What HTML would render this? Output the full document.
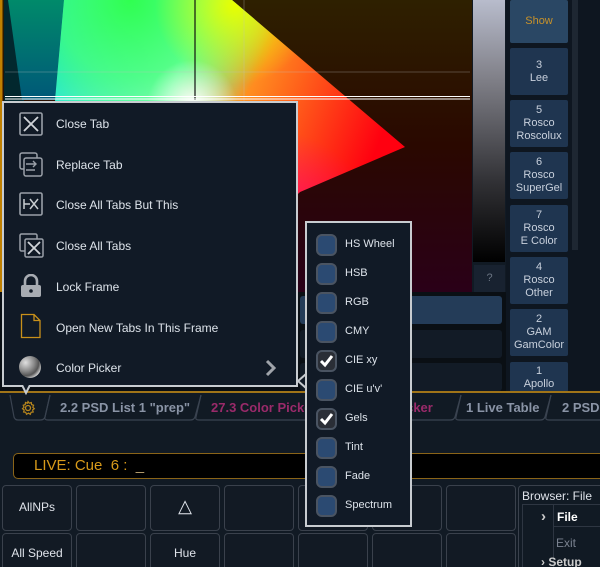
<!DOCTYPE html>
<html><head><meta charset="utf-8"><style>
*{margin:0;padding:0;box-sizing:border-box}
html{width:600px;height:567px;overflow:hidden}
body{width:600px;height:567px;overflow:hidden;background:#111a24;font-family:"Liberation Sans",sans-serif;position:relative}
.abs{position:absolute}
.gbtn{position:absolute;left:510px;width:58px;background:#1f3550;color:#c8d0dc;font-size:11px;text-align:center;line-height:13px;display:flex;flex-direction:column;justify-content:center;border-radius:2px}
.row{position:absolute;left:300px;width:202px;height:28px;border-radius:3px;background:#121b26}
.tab{position:absolute;top:394px;height:27px;font-size:13px;font-weight:bold;color:#8a94a6;line-height:27px;padding-left:10px;white-space:nowrap;overflow:hidden}
.sep{position:absolute;top:396px;width:8px;height:24px}
.key{position:absolute;width:70px;background:#121a24;border:1.5px solid #3a414c;border-radius:4px;color:#dfe3ea;font-size:12px;text-align:center}
.menu{position:absolute;left:2px;top:101px;width:296px;height:286px;background:#111a26;border:2px solid #c8ccd0}
.mi{position:absolute;left:52px;font-size:12px;color:#dde3ea}
.ic{position:absolute;left:15px}
.sub{position:absolute;left:305px;top:221px;width:107px;height:306px;background:#111a26;border:2px solid #c8ccd0}
.cb{position:absolute;left:9px;width:21px;height:22px;border-radius:6px;background:#2b4a72;border:2px solid #4a5462}
.sl{position:absolute;left:38px;font-size:11px;color:#dde3ea}
</style></head><body>
<svg class="abs" style="left:0;top:0" width="472" height="292">
<defs>
<linearGradient id="bg" x1="0" y1="0" x2="0" y2="1"><stop offset="0" stop-color="#2e2000"/><stop offset="0.5" stop-color="#2a0800"/><stop offset="1" stop-color="#2a0018"/></linearGradient>
<linearGradient id="base" x1="0" y1="0" x2="1" y2="0.3"><stop offset="0" stop-color="#00d8ff"/><stop offset="0.4" stop-color="#b0ffe0"/><stop offset="0.6" stop-color="#ff9020"/><stop offset="1" stop-color="#ff0010"/></linearGradient>
<radialGradient id="gr" cx="130" cy="0" r="150" gradientUnits="userSpaceOnUse"><stop offset="0" stop-color="#30ff50"/><stop offset="0.5" stop-color="#40ff70" stop-opacity="0.8"/><stop offset="1" stop-color="#30ff50" stop-opacity="0"/></radialGradient>
<radialGradient id="ye" cx="235" cy="5" r="80" gradientUnits="userSpaceOnUse"><stop offset="0" stop-color="#e8ff00"/><stop offset="1" stop-color="#e8ff00" stop-opacity="0"/></radialGradient>
<radialGradient id="wh" cx="192" cy="105" r="45" gradientUnits="userSpaceOnUse"><stop offset="0" stop-color="#fff"/><stop offset="1" stop-color="#fff" stop-opacity="0"/></radialGradient>
<radialGradient id="mg" cx="270" cy="240" r="110" gradientUnits="userSpaceOnUse"><stop offset="0" stop-color="#ff0080"/><stop offset="1" stop-color="#ff0080" stop-opacity="0"/></radialGradient>
<linearGradient id="tl" x1="0" y1="0" x2="0" y2="1"><stop offset="0" stop-color="#008a6a"/><stop offset="1" stop-color="#005878"/></linearGradient>
</defs>
<rect width="472" height="292" fill="url(#bg)"/>
<rect x="4" width="20" height="292" fill="#02282e"/>
<polygon points="8,0 64,0 55,100 22,100" fill="url(#tl)"/>
<g>
<polygon points="64,0 232,0 405,147 300,192 260,230 200,260 60,120 55,100" fill="url(#base)"/>
<polygon points="64,0 232,0 405,147 300,192 260,230 200,260 60,120 55,100" fill="url(#gr)"/>
<polygon points="64,0 232,0 405,147 300,192 260,230 200,260 60,120 55,100" fill="url(#ye)"/>
<polygon points="64,0 232,0 405,147 300,192 260,230 200,260 60,120 55,100" fill="url(#wh)"/>
<polygon points="64,0 232,0 405,147 300,192 260,230 200,260 60,120 55,100" fill="url(#mg)"/>
</g>
<line x1="244" y1="0" x2="244" y2="292" stroke="#c0c0c0" stroke-opacity="0.3"/>
<line x1="5" y1="72" x2="470" y2="72" stroke="#c0c0c0" stroke-opacity="0.3"/>
<line x1="195" y1="0" x2="195" y2="100" stroke="#111" stroke-width="1.2"/>
<line x1="5" y1="96.5" x2="470" y2="96.5" stroke="#fff" stroke-width="1"/>
<line x1="5" y1="99" x2="470" y2="99" stroke="#fff" stroke-width="1"/>
<rect x="0" width="2.5" height="392" fill="#c08000"/>
</svg>
<div class="abs" style="left:473px;top:0;width:32px;height:262px;background:linear-gradient(#b8bccc,#808088 30%,#303034 70%,#000)"></div>
<div class="abs" style="left:474px;top:265px;width:31px;height:27px;background:#182230;color:#6a7482;font-size:11px;text-align:center;line-height:27px">?</div>
<div class="abs" style="left:506px;top:0;width:94px;height:392px;background:#0e1620"></div>
<div class="abs" style="left:572px;top:0;width:6px;height:250px;background:#1e2732"></div>
<div class="gbtn" style="top:0;height:43px;background:#2a4764;color:#c8922a">Show</div>
<div class="gbtn" style="top:48px;height:47px">3<br>Lee</div>
<div class="gbtn" style="top:100px;height:47px">5<br>Rosco<br>Roscolux</div>
<div class="gbtn" style="top:152px;height:47px">6<br>Rosco<br>SuperGel</div>
<div class="gbtn" style="top:205px;height:47px">7<br>Rosco<br>E Color</div>
<div class="gbtn" style="top:257px;height:47px">4<br>Rosco<br>Other</div>
<div class="gbtn" style="top:309px;height:47px">2<br>GAM<br>GamColor</div>
<div class="gbtn" style="top:362px;height:30px;justify-content:flex-start;padding-top:3px">1<br>Apollo</div>
<div class="abs" style="left:0;top:292px;width:506px;height:100px;background:#0a0f14"></div>
<div class="row" style="top:296px;background:#243c58"></div>
<div class="row" style="top:330px"></div>
<div class="row" style="top:363px"></div>
<div class="abs" style="left:0;top:391px;width:600px;height:2px;background:#a07418"></div>
<!-- tabs -->
<div class="tab" style="left:12px;width:34px;padding-left:8px">
<svg width="16" height="16" viewBox="0 0 16 16" style="margin-top:6px"><circle cx="8" cy="8" r="2.5" fill="none" stroke="#b8861c" stroke-width="1.3"/><path d="M8 1.5 L9.2 3.2 L11.3 2.5 L11.6 4.6 L13.6 5.2 L12.8 7.2 L14.3 8.7 L12.6 10 L13.2 12 L11.1 12.3 L10.3 14.3 L8.5 13.1 L6.5 14.3 L5.7 12.3 L3.6 12 L4.2 10 L2.5 8.7 L4 7.2 L3.2 5.2 L5.2 4.6 L5.5 2.5 L7.4 3.2Z" fill="none" stroke="#b8861c" stroke-width="1.2"/></svg></div>
<svg class="abs" style="left:0;top:393px" width="600" height="30"><g fill="none" stroke="#3a4350" stroke-width="1.2">
<path d="M10 2 L14 24 Q15 27 18 27 L40 27 Q44 27 45 24 L50 2"/>
<path d="M50 2 L45 24 Q44 27 48 27 L190 27 Q194 27 195 24 L201 2"/>
<path d="M201 2 L196 24 Q195 27 199 27 L450 27 Q454 27 455 24 L461 2"/>
<path d="M461 2 L456 24 Q455 27 459 27 L540 27 Q544 27 545 24 L551 2"/>
<path d="M551 2 L546 24 Q545 27 549 27 L600 27"/>
</g></svg>
<div class="tab" style="left:50px;width:148px">2.2 PSD List 1 "prep"</div>
<div class="tab" style="left:201px;width:255px;color:#9a2a6a">27.3 Color Picker &nbsp; 27.3 Color Picker</div>
<div class="tab" style="left:456px;width:92px">1 Live Table</div>
<div class="tab" style="left:552px;width:60px">2 PSD</div>
<!-- command line -->
<div class="abs" style="left:13px;top:453px;width:600px;height:26px;background:#000;border:1.5px solid #8a6418;border-radius:5px;color:#d89a1a;font-size:15px;line-height:23px;padding-left:20px;white-space:pre">LIVE: Cue  6 :  <span style="color:#b8a070">_</span></div>
<!-- keys -->
<div class="key" style="left:2px;top:485px;height:46px;line-height:43px">AllNPs</div>
<div class="key" style="left:76px;top:485px;height:46px"></div>
<div class="key" style="left:150px;top:485px;height:46px;font-size:18px;line-height:40px">△</div>
<div class="key" style="left:224px;top:485px;height:46px"></div>
<div class="key" style="left:298px;top:485px;height:46px"></div>
<div class="key" style="left:372px;top:485px;height:46px"></div>
<div class="key" style="left:446px;top:485px;height:46px"></div>
<div class="key" style="left:2px;top:533px;height:40px;line-height:38px">All Speed</div>
<div class="key" style="left:76px;top:533px;height:40px"></div>
<div class="key" style="left:150px;top:533px;height:40px;line-height:38px">Hue</div>
<div class="key" style="left:224px;top:533px;height:40px"></div>
<div class="key" style="left:298px;top:533px;height:40px"></div>
<div class="key" style="left:372px;top:533px;height:40px"></div>
<div class="key" style="left:446px;top:533px;height:40px"></div>
<div class="abs" style="left:518px;top:485px;width:90px;height:90px;background:#111a24;border:1.5px solid #3a414c;border-radius:4px">
<div style="color:#dfe3ea;font-size:12px;padding:3px 0 0 3px">Browser: File</div>
<div class="abs" style="left:3px;top:18px;width:90px;height:80px;border:1px solid #2e3642"></div>
<div class="abs" style="left:34px;top:19px;height:80px;border-left:1px solid #2e3642"></div>
<div class="abs" style="left:35px;top:19px;width:60px;height:22px;border-bottom:1px solid #2e3642;color:#fff;font-size:12px;font-weight:bold;padding:5px 0 0 3px">File</div>
<div class="abs" style="left:22px;top:22px;color:#ccc;font-size:15px;font-weight:bold">›</div>
<div class="abs" style="left:37px;top:50px;color:#7a8290;font-size:12px">Exit</div>
<div class="abs" style="left:22px;top:69px;color:#ccc;font-size:12px;font-weight:bold">› Setup</div>
</div>
<!-- context menu -->
<div class="menu">
<svg class="ic" style="top:9px" width="24" height="24"><rect x="1" y="1" width="22" height="22" rx="1.5" fill="none" stroke="#9aa0a8" stroke-width="1.6"/><path d="M5 5 L19 19 M19 5 L5 19" stroke="#d0d4d8" stroke-width="1.8"/></svg>
<div class="mi" style="top:14px">Close Tab</div>
<svg class="ic" style="top:49px" width="24" height="25"><rect x="1" y="1" width="17" height="16" rx="2" fill="none" stroke="#9aa0a8" stroke-width="1.5"/><rect x="5" y="6" width="18" height="18" rx="2" fill="#111a26" stroke="#9aa0a8" stroke-width="1.5"/><path d="M7 12 L17 12 M14 9 L17 12 L14 15 M16 18 L7 18" stroke="#9aa0a8" stroke-width="1.4" fill="none"/></svg>
<div class="mi" style="top:55px">Replace Tab</div>
<svg class="ic" style="top:89px" width="24" height="24"><rect x="1" y="1" width="22" height="22" rx="1.5" fill="none" stroke="#9aa0a8" stroke-width="1.6"/><path d="M5 7 L5 17 M5 12 L11 12 M11 7 L19 17 M19 7 L11 17" stroke="#c8ccd0" stroke-width="1.5"/></svg>
<div class="mi" style="top:95px">Close All Tabs But This</div>
<svg class="ic" style="top:130px" width="25" height="25"><rect x="1" y="1" width="17" height="17" rx="1.5" fill="none" stroke="#9aa0a8" stroke-width="1.5"/><rect x="6" y="6" width="18" height="18" rx="1.5" fill="#111a26" stroke="#9aa0a8" stroke-width="1.5"/><path d="M9 9 L21 21 M21 9 L9 21" stroke="#d0d4d8" stroke-width="1.8"/></svg>
<div class="mi" style="top:136px">Close All Tabs</div>
<svg class="ic" style="top:171px;left:16px" width="22" height="24"><path d="M5 11 V7 A6 6 0 0 1 17 7 V11" fill="none" stroke="#a8acb2" stroke-width="2.6"/><rect x="1" y="11" width="20" height="12" rx="2" fill="#a8acb2"/><circle cx="11" cy="17" r="1.8" fill="#111a26"/></svg>
<div class="mi" style="top:177px">Lock Frame</div>
<svg class="ic" style="top:210px;left:16px" width="22" height="26"><path d="M1.5 1.5 H14 L20 7.5 V24.5 H1.5 Z M14 1.5 V7.5 H20" fill="none" stroke="#c8901a" stroke-width="1.3"/></svg>
<div class="mi" style="top:218px">Open New Tabs In This Frame</div>
<svg class="ic" style="top:252px;left:14px" width="24" height="24"><defs><radialGradient id="sp" cx="0.3" cy="0.3" r="0.8"><stop offset="0" stop-color="#e0e0e0"/><stop offset="0.5" stop-color="#888"/><stop offset="0.75" stop-color="#555"/><stop offset="1" stop-color="#e8e8e8"/></radialGradient></defs><circle cx="12" cy="12" r="11" fill="url(#sp)"/></svg>
<div class="mi" style="top:258px">Color Picker</div>
<svg class="abs" style="left:260px;top:255px" width="14" height="20"><path d="M3 3 L10 10 L3 17" fill="none" stroke="#a0a4aa" stroke-width="3"/></svg>
</div>
<svg class="abs" style="left:12px;top:385px" width="28" height="10"><path d="M0 0 L10 0 L14 8 L18 0 L28 0" fill="#111a26" stroke="#c8ccd0" stroke-width="2"/></svg>
<svg class="abs" style="left:296px;top:370px" width="12" height="22"><path d="M10 0 L10 4 L2 11 L10 18 L10 22" fill="#111a26" stroke="#c8ccd0" stroke-width="2"/></svg>
<!-- submenu -->
<div class="sub">
<div class="cb" style="top:11px"></div><div class="sl" style="top:15px">HS Wheel</div>
<div class="cb" style="top:40px"></div><div class="sl" style="top:44px">HSB</div>
<div class="cb" style="top:69px"></div><div class="sl" style="top:73px">RGB</div>
<div class="cb" style="top:98px"></div><div class="sl" style="top:102px">CMY</div>
<div class="cb" style="top:127px;background:#2a2e36"><svg width="17" height="18"><path d="M3 9 L7 13 L14 4" fill="none" stroke="#fff" stroke-width="3"/></svg></div><div class="sl" style="top:131px">CIE xy</div>
<div class="cb" style="top:156px"></div><div class="sl" style="top:160px">CIE u'v'</div>
<div class="cb" style="top:185px;background:#2a2e36"><svg width="17" height="18"><path d="M3 9 L7 13 L14 4" fill="none" stroke="#fff" stroke-width="3"/></svg></div><div class="sl" style="top:189px">Gels</div>
<div class="cb" style="top:214px"></div><div class="sl" style="top:218px">Tint</div>
<div class="cb" style="top:243px"></div><div class="sl" style="top:247px">Fade</div>
<div class="cb" style="top:272px"></div><div class="sl" style="top:276px">Spectrum</div>
</div>
</body></html>
